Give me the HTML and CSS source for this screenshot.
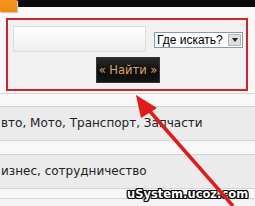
FILE: index.html
```html
<!DOCTYPE html>
<html>
<head>
<meta charset="utf-8">
<link rel="stylesheet" href="styles.css">
</head>
<body>
<div class="page">
  <div class="topbar"><div class="tab"></div></div>
  <div class="search">
    <div class="search-top">
      <div class="field"></div>
      <div class="select"><span class="select-label">Где искать?</span><span class="select-btn"><span class="tri"></span></span></div>
    </div>
    <div class="search-bottom">
      <button class="find">« Найти »</button>
    </div>
  </div>
  <div class="sep"></div>
  <div class="row first">вто, Мото, Транспорт, Запчасти</div>
  <div class="row second">изнес, сотрудничество</div>
  <div class="row short"></div>
  <div class="watermark">uSystem.ucoz.com</div>
  <svg class="arrow" width="255" height="206" viewBox="0 0 255 206">
    <line x1="140" y1="100" x2="233" y2="206" stroke="#e21a1a" stroke-width="3.5"/>
    <polygon points="136,95 157,108 141,118" fill="#e21a1a"/>
  </svg>
</div>
</body>
</html>
```
FILE: styles.css
```css
html, body { margin: 0; padding: 0; }
body { background: #fff; font-family: "DejaVu Sans", Verdana, sans-serif; overflow: hidden; }
.page { position: relative; width: 255px; height: 206px; overflow: hidden; background: #f8f8f8; }
.topbar { height: 7px; background: #0a0a0a; margin-bottom: 11px; position: relative; }
.tab { width: 17px; height: 12px; background: linear-gradient(#f7941d, #f08a10); box-shadow: 1px 1px 1px #c9c9c9; }
.search {
  margin-left: 6px; width: 238px; height: 69px;
  border: 2px solid #d2232a;
  background: #f1f1f1;
  display: flex; flex-direction: column;
}
.search-top { display: flex; padding: 6px 0 0 5px; height: 26px; }
.field {
  width: 131px; height: 24px;
  border: 1px solid #dcdcdc;
  background: linear-gradient(#ffffff, #efefef);
}
.select {
  margin: 6px 0 0 8px; width: 87px; height: 14px;
  border: 1px solid #7f9db9; background: #fff;
  display: flex; align-items: center; justify-content: space-between;
  font-size: 12px; color: #000; font-family: "Liberation Sans", Arial, sans-serif;
  white-space: nowrap;
}
.select-label { padding-left: 2px; line-height: 14px; }
.select-btn {
  width: 13px; height: 12px; margin-right: 1px;
  background: #dedede; border: 1px solid #b4b4b4; box-sizing: border-box;
  display: flex; align-items: center; justify-content: center;
}
.tri { width: 0; height: 0; border-left: 3px solid transparent; border-right: 3px solid transparent; border-top: 4px solid #222; }
.search-bottom { display: flex; justify-content: center; padding-top: 5px; }
.find {
  width: 64px; height: 26px; margin-left: 2px;
  border: 1px solid #333; background: linear-gradient(#2a2a28, #0c0c0c 60%, #151515);
  color: #d9a46a; font-family: "DejaVu Sans", Tahoma, sans-serif; font-size: 11.5px;
  padding: 0; white-space: nowrap;
}
.sep { height: 1px; background: #d8d8d8; margin-top: 2px; }
.row {
  height: 35px; box-sizing: border-box;
  border-top: 1px solid #d4d4d4; border-bottom: 1px solid #d4d4d4;
  background: #ebebeb;
  font-size: 12px; color: #222; line-height: 33px; padding-left: 1px; white-space: nowrap;
}
.row.first { margin-top: 12px; }
.row.second { margin-top: 13px; }
.row.short { margin-top: 9px; background: #f3f3f3; }
.watermark {
  position: absolute; left: 127px; top: 187px;
  font-family: "DejaVu Sans", Verdana, sans-serif; font-weight: bold; font-size: 11.5px; color: #fff;
  text-shadow: -1px -1px 0 #000, 1px -1px 0 #000, -1px 1px 0 #000, 1px 1px 0 #000, 0 1px 0 #000, 0 -1px 0 #000, 1px 0 0 #000, -1px 0 0 #000;
}
.arrow { position: absolute; left: 0; top: 0; }
```
